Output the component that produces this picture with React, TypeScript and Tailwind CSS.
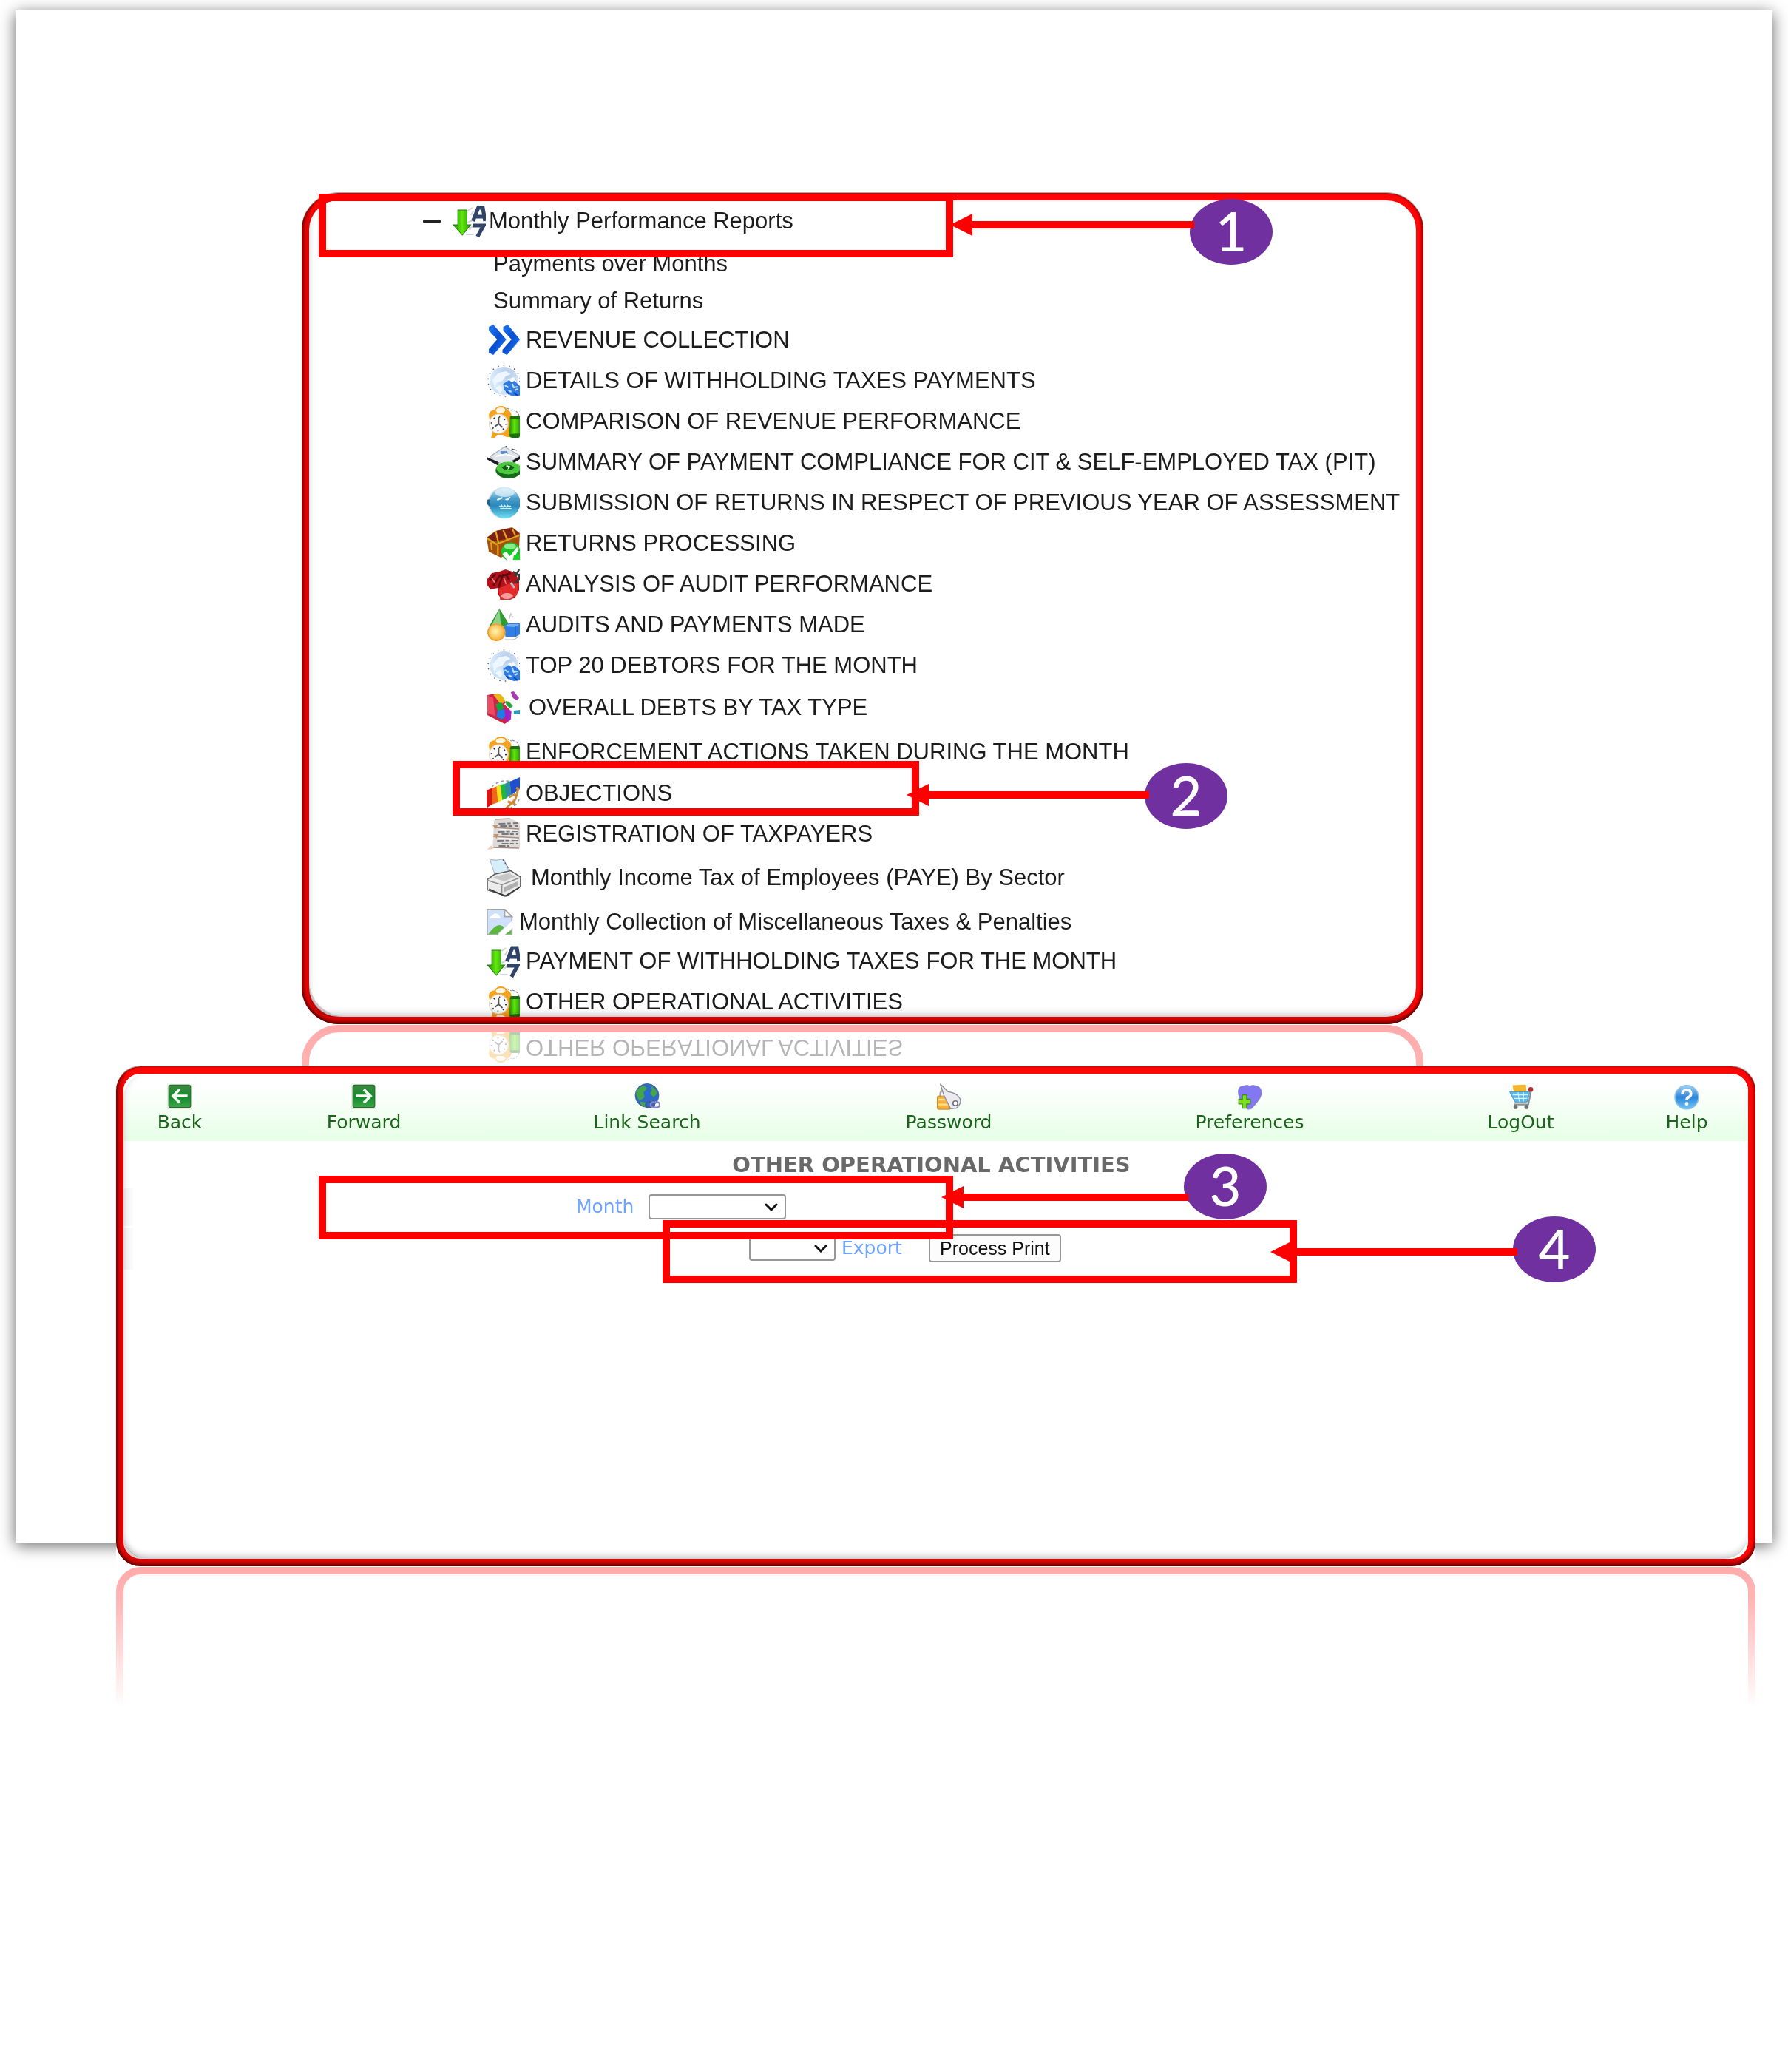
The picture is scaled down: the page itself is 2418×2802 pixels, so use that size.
import React from "react";

function Defs() {
  return (
    <svg className="absolute size-0" aria-hidden="true">
      <defs>
        <linearGradient id="blue" x1="0" y1="0" x2="1" y2="1">
          <stop offset="0" stopColor="#1d78f5" />
          <stop offset="0.5" stopColor="#0a4fd0" />
          <stop offset="1" stopColor="#1f7dff" />
        </linearGradient>
        <linearGradient id="green" x1="0" y1="0" x2="1" y2="0">
          <stop offset="0" stopColor="#1f8a08" />
          <stop offset="0.5" stopColor="#62e80c" />
          <stop offset="1" stopColor="#2a9a0a" />
        </linearGradient>
        <radialGradient id="globe" cx="0.6" cy="0.25" r="0.9">
          <stop offset="0" stopColor="#b4c9e8" />
          <stop offset="0.6" stopColor="#d9ebfb" />
          <stop offset="1" stopColor="#bcd8f2" />
        </radialGradient>
        <linearGradient id="orb" x1="0" y1="0" x2="0" y2="1">
          <stop offset="0" stopColor="#d5ecf8" />
          <stop offset="0.35" stopColor="#4b9fcb" />
          <stop offset="0.6" stopColor="#2a86bb" />
          <stop offset="1" stopColor="#6fe0f2" />
        </linearGradient>
        <radialGradient id="gold" cx="0.45" cy="0.45" r="0.6">
          <stop offset="0" stopColor="#fff6b0" />
          <stop offset="1" stopColor="#f3a528" />
        </radialGradient>
        <linearGradient id="help" x1="0" y1="0" x2="0" y2="1">
          <stop offset="0" stopColor="#9fd4f5" />
          <stop offset="0.5" stopColor="#2d86dc" />
          <stop offset="1" stopColor="#6fc6f7" />
        </linearGradient>
        <linearGradient id="leaf" x1="0" y1="0" x2="0" y2="1">
          <stop offset="0" stopColor="#3b8a3f" />
          <stop offset="0.55" stopColor="#148a2c" />
          <stop offset="1" stopColor="#3da64a" />
        </linearGradient>
      </defs>
    </svg>
  );
}

function Svg({ children, className = "h-11 w-[45px]" }: { children: React.ReactNode; className?: string }) {
  return (
    <svg viewBox="0 0 44 44" preserveAspectRatio="none" className={"shrink-0 " + className} fill="none" aria-hidden="true">
      {children}
    </svg>
  );
}

const SortIcon = () => (
  <Svg>
    <path d="M20 8l6-4M24 14l4-6M18 40h10M22 34l5-6M20 24l8-4" stroke="#d4d4d8" strokeWidth="2" />
    <path d="M7 7h12v20h5L13 41 1 27h6z" fill="url(#green)" stroke="#1c7a0c" strokeWidth="1" />
    <path d="M27 22L34 4h6l3 18M29 16h13" stroke="#2f4468" strokeWidth="5" />
    <path d="M27 28h14L33 43" stroke="#2f4468" strokeWidth="5" />
  </Svg>
);

const ChevronsIcon = () => (
  <Svg>
    <g stroke="#6e7682" strokeWidth="8" opacity="0.25">
      <path d="M7 6l14 16L6 37" />
      <path d="M26 6l14 16L25 38" />
    </g>
    <path d="M3 4l6-3 17 20L9 42l-6-3v-5l11-13L3 9z" fill="url(#blue)" />
    <path d="M22 4l6-3 16 20-17 21-6-3v-4l12-14L22 9z" fill="url(#blue)" />
  </Svg>
);

const GlobeIcon = () => (
  <Svg>
    <circle cx="23" cy="22" r="19" fill="url(#globe)" />
    <circle cx="23" cy="22" r="21" stroke="#555e6c" strokeWidth="1.4" strokeDasharray="1.5 6" />
    <path d="M8 20l8-9 10-2 6 4-7 3-4 6-8 3-2 8z" fill="#eef7ff" />
    <path d="M12 32l6-4 3 6-3 5z" fill="#eef7ff" />
    <path d="M28 20l8-3 3 6-6 2z" fill="#fff" />
    <path d="M22 26l8-5 3 3 4-2 3 3 4 4v13l-8 1-7-3-6-6z" fill="#2f7bdf" />
    <path d="M24 28l5 3M34 26l2 5 5-1M29 35l4 2M37 35l4-2" stroke="#b9dcff" strokeWidth="2.2" />
    <path d="M26 36l4 4M36 38l5 4" stroke="#0a46bf" strokeWidth="2" />
  </Svg>
);

const ClockIcon = () => (
  <Svg>
    <path d="M3 14q0-7 8-8Q13 1 19 1t8 5q6 2 6 9l-3 20 2 8h-6l-4-3h-8l-3 4H6l2-8Q3 28 4 20z" fill="#f7a21c" />
    <path d="M12 7q2-4 7-4t6 4l-3 3h-8z" fill="#fff6e4" />
    <path d="M27 4l6 3M34 6q8 2 9 9" stroke="#8c8c8c" strokeWidth="1.2" strokeDasharray="3 2" />
    <ellipse cx="16" cy="25" rx="12.5" ry="13" fill="#fafafa" stroke="#dcd2c0" />
    <path d="M16 16v9l-5 4M16 25l5 5" stroke="#555" strokeWidth="1.8" />
    <circle cx="16" cy="25" r="9.5" stroke="#333" strokeWidth="2" strokeDasharray="1.5 6" />
    <path d="M31 17q0-3 3-3h8q2 0 2 2v26q0 2-3 2h-7q-4 0-4-4z" fill="url(#green)" />
    <path d="M31 17q0-3 3-3h8q2 0 2 2v2H31zM31 39v3l3 2h8l2-3v-3z" fill="#1d6d10" />
  </Svg>
);

const RecycleIcon = () => (
  <Svg>
    <path d="M5 14L24 1l20 12-6 8-14 4-14-4z" fill="#dfe3ea" stroke="#a5abb5" />
    <path d="M24 2l3-2M33 4l7 2" stroke="#444" strokeWidth="1.2" />
    <path d="M0 15l16 7v5L0 18zM34 20l10-6v4l-8 5z" fill="#1c1c22" />
    <path d="M18 7h9l2 4h-10z" fill="#5d8fc0" />
    <path d="M12 14l14-3 12 4" stroke="#fff" strokeWidth="2" />
    <ellipse cx="29" cy="33" rx="17" ry="11" fill="#146b1a" />
    <ellipse cx="29" cy="30" rx="16" ry="8.5" fill="#4cc93f" />
    <path d="M20 29q8-7 17 0l-4 4-5-2-4 2z" fill="#0f5c14" />
    <path d="M26 27l4 1-1 3" stroke="#d6ffd0" strokeWidth="2" />
  </Svg>
);

const OrbIcon = () => (
  <Svg>
    <circle cx="23" cy="22" r="21.5" fill="#d7e4ea" />
    <ellipse cx="24" cy="22" rx="20.5" ry="21" fill="url(#orb)" />
    <path d="M1 18l-1 5 4 4V17z" fill="#2b5f80" />
    <ellipse cx="24" cy="8" rx="13" ry="6" fill="#e8f5fb" opacity="0.7" />
    <path d="M14 18l7-3M25 17q3 2 6-3" stroke="#dff4ff" strokeWidth="2" />
    <path d="M17 26q2 3 3 0 2 3 4 0 2 3 4 0 2 3 4 0M18 30h15" stroke="#bff3ff" strokeWidth="2" />
  </Svg>
);

const ChestIcon = () => (
  <Svg>
    <path d="M0 14L12 5 34 0l10 8-1 20-24 13-16-8z" fill="#a5500f" />
    <path d="M1 14L13 5 34 1l9 7-9 6-28 6z" fill="#7a1f14" />
    <path d="M1 15l12 8 30-12M12 5l4 17M22 4l6 14M34 2l4 9M6 20l1 11M15 24v14M28 22v10" stroke="#e0a31c" strokeWidth="2.2" />
    <circle cx="32" cy="33" r="12.5" fill="#17c524" />
    <ellipse cx="31" cy="26" rx="8" ry="4" fill="#a5f5a8" opacity="0.8" />
    <path d="M21 36l5-3 5 6 9-12 3 2-8 15h-8z" fill="#fff" />
    <path d="M36 38h8v6h-9z" fill="#12d81f" />
  </Svg>
);

const AuditIcon = () => (
  <Svg>
    <path d="M1 15l6-8 10-2 8-3 12 4 6 10v14l-6 11-16 2-6-7v-9l-10 2-5-7z" fill="#b3121a" />
    <path d="M16 28l12-6 15-1-3 16-8 6H18z" fill="#e42b2b" />
    <ellipse cx="27" cy="38" rx="8" ry="4" fill="#ff9c9c" />
    <path d="M4 17l8-9M9 24l9-15M16 26l6-18M25 8l5 8M18 12l14-5" stroke="#5e0b10" strokeWidth="2.4" />
    <path d="M7 14l4 6M23 14l3 8" stroke="#f08a8a" strokeWidth="1.5" />
    <path d="M35 5l5 3 3-6M36 10l7-1v7l-6 4" stroke="#3a3a3a" strokeWidth="2.4" />
    <path d="M32 20l5 7" stroke="#b9b9c4" strokeWidth="3" />
  </Svg>
);

const ShapesIcon = () => (
  <Svg>
    <path d="M17 0l12 20-6 7-10-3-9-1z" fill="#2f9a32" />
    <path d="M17 1l2 22-12-1z" fill="#8ed188" />
    <path d="M30 14l2-7 3 5M24 42h12l7-4" stroke="#b9b9c4" strokeWidth="1.2" />
    <path d="M23 24l6-4h15v15l-5 3H25z" fill="#2f7fe6" />
    <path d="M23 24l6-3h15l-6 4z" fill="#6fb0f6" />
    <path d="M38 24v14" stroke="#1b5fc4" strokeWidth="1.5" />
    <circle cx="13" cy="32" r="12" fill="url(#gold)" />
    <circle cx="13" cy="32" r="11" stroke="#f0a030" strokeWidth="1.5" />
  </Svg>
);

const CubesIcon = () => (
  <Svg>
    <path d="M1 5l10-2 9 4 12 20-1 12-7 5L1 32z" fill="#cf2347" />
    <path d="M1 5l8 4 2 24-10-4z" fill="#f04a62" />
    <path d="M9 5q10-6 16 8l-6 5Q12 8 9 5z" fill="#e9b414" />
    <path d="M12 17l8-2 3 8-8 4z" fill="#14a83a" />
    <path d="M15 26l8-2 4 9-7 5-7-4z" fill="#1f7be6" />
    <path d="M24 24l9 2-1 12-7 3z" fill="#a51fc6" />
    <path d="M23 17l6-3 6 5-5 5z" fill="#fff" />
    <path d="M25 13l5 1 5 6-4 3-5-5z" fill="#26a339" />
    <path d="M32 1l4-1 7 9-3 3-5-3z" fill="#a83bb5" />
    <path d="M36 26l9-1v6h-9z" fill="#2f9ab5" />
  </Svg>
);

const RainbowIcon = () => (
  <Svg>
    <path d="M7 13Q18 2 33 6M43 30q-4 10-14 12" stroke="#9a9a9a" strokeWidth="1.5" strokeDasharray="4 3" />
    <path d="M0 18l8-4-1 23-6 4q-3-8-1-23z" fill="#d91414" />
    <path d="M7 15l7-3 1 22-8 3z" fill="#f2661b" />
    <path d="M13 12l6-2 2 21-6 3z" fill="#f7e01c" />
    <path d="M18 10l7-1 2 19-6 3z" fill="#1fb83a" />
    <path d="M24 9l8-4 2 18-8 5z" fill="#2f8f9e" />
    <path d="M31 6l13-6v16l-11 8z" fill="#1f4fd0" />
    <path d="M39 14l3 2-4 14-12 12M30 27l8-4M28 33l10 3" stroke="#d08a35" strokeWidth="3" />
  </Svg>
);

const PapersIcon = () => (
  <Svg>
    <path d="M10 3l22-2 12 6v34H8z" fill="#dedbd9" />
    <path d="M11 2l20-1M10 13l33 2M9 25l34 2M9 40l34 1" stroke="#a58f84" strokeWidth="1.5" />
    <path d="M16 8l26-1M18 11h24M15 19l26-1M20 22h22M14 31l28-1M20 35h22M16 38h14" stroke="#77777c" strokeWidth="2" strokeDasharray="9 2 5 3" />
    <path d="M17 16l24 1M16 28l25 1" stroke="#fff" strokeWidth="2" />
    <path d="M8 10h7l-3 5zM9 22h7l-3 6zM12 33l4 5" fill="#c4936b" />
    <path d="M1 43l5-6 3 5z" fill="#f4c9bd" />
  </Svg>
);

const PrinterIcon = () => (
  <Svg className="h-[52px] w-[48px]">
    <path d="M4 1q9 2 17-1l8 17-18 3z" fill="#d6eefa" stroke="#a9b4c4" strokeWidth="1" />
    <path d="M20 1l10 14" stroke="#555e6c" strokeWidth="1.2" strokeDasharray="3 1.5" />
    <path d="M1 24l9-6 20-4 12 7v11L25 43 1 36z" fill="#ececec" stroke="#5a5a5a" strokeWidth="1.3" />
    <path d="M1 25l18 5 22-8M19 30v11" stroke="#8e8e8e" strokeWidth="1.3" />
    <path d="M8 22l14 4 14-5-8-4-16 3z" fill="#c6c6c6" />
    <path d="M3 35l20 8 18-10" stroke="#3a3a3a" strokeWidth="1.4" />
    <path d="M21 33l18-7v5l-18 8z" fill="#b0b0b0" />
  </Svg>
);

const BrokenIcon = () => (
  <Svg className="h-9 w-9">
    <path d="M1 1h29l12 12v30H1z" fill="#cfe0fb" stroke="#a3a3a3" strokeWidth="2" />
    <path d="M3 42Q12 28 21 27q6 1 8 4L18 42z" fill="#5cb83c" />
    <path d="M30 42l11-7v7z" fill="#5cb83c" />
    <path d="M5 16q0-4 4-4 3-6 8-4 5 2 6 8z" fill="#fff" />
    <path d="M44 18L18 44h11l15-13z" fill="#fff" />
    <path d="M30 1v12h12z" fill="#fff" stroke="#a3a3a3" strokeWidth="2" />
  </Svg>
);

type Item = { label: string; icon?: React.ReactNode; row?: string; link?: string };

const items: Item[] = [
  { label: "Payments over Months", row: "mt-[6px] h-[50px] pl-[249px]" },
  { label: "Summary of Returns", row: "h-[50px] pl-[249px]" },
  { label: "REVENUE COLLECTION", icon: <ChevronsIcon /> },
  { label: "DETAILS OF WITHHOLDING TAXES PAYMENTS", icon: <GlobeIcon /> },
  { label: "COMPARISON OF REVENUE PERFORMANCE", icon: <ClockIcon /> },
  { label: "SUMMARY OF PAYMENT COMPLIANCE FOR CIT & SELF-EMPLOYED TAX (PIT)", icon: <RecycleIcon /> },
  { label: "SUBMISSION OF RETURNS IN RESPECT OF PREVIOUS YEAR OF ASSESSMENT", icon: <OrbIcon /> },
  { label: "RETURNS PROCESSING", icon: <ChestIcon /> },
  { label: "ANALYSIS OF AUDIT PERFORMANCE", icon: <AuditIcon /> },
  { label: "AUDITS AND PAYMENTS MADE", icon: <ShapesIcon /> },
  { label: "TOP 20 DEBTORS FOR THE MONTH", icon: <GlobeIcon /> },
  { label: "OVERALL DEBTS BY TAX TYPE", icon: <CubesIcon />, row: "h-[60px] pl-[240px]", link: "gap-3" },
  { label: "ENFORCEMENT ACTIONS TAKEN DURING THE MONTH", icon: <ClockIcon />, row: "h-[60px] pl-[240px]" },
  { label: "OBJECTIONS", icon: <RainbowIcon />, row: "h-[52px] pl-[240px]" },
  { label: "REGISTRATION OF TAXPAYERS", icon: <PapersIcon />, row: "h-[58px] pl-[240px]" },
  { label: "Monthly Income Tax of Employees (PAYE) By Sector", icon: <PrinterIcon />, row: "h-[60px] pl-[240px]", link: "gap-3" },
  { label: "Monthly Collection of Miscellaneous Taxes & Penalties", icon: <BrokenIcon />, row: "h-[60px] pl-[240px]" },
  { label: "PAYMENT OF WITHHOLDING TAXES FOR THE MONTH", icon: <SortIcon />, row: "h-[46px] pl-[240px]" },
  { label: "OTHER OPERATIONAL ACTIVITIES", icon: <ClockIcon />, row: "h-16 pl-[240px]" },
];

function Frame({ radius, children }: { radius: string; children: React.ReactNode }) {
  return (
    <>
      <div
        className={
          "flex flex-col overflow-hidden border-[10px] border-[#ff0505] bg-white [-webkit-box-reflect:below_1px_linear-gradient(to_top,rgba(0,0,0,0.34),rgba(0,0,0,0.3)_6%,transparent_28%)] " +
          radius
        }
      >
        {children}
      </div>
      <div
        className={
          "pointer-events-none absolute inset-0 shadow-[0_-1px_1px_#9aa3a3,inset_0_-4px_4px_rgba(0,0,0,0.45),inset_3px_0_3px_rgba(0,0,0,0.3),inset_-3px_0_3px_rgba(0,0,0,0.25),inset_10px_-10px_0_rgba(80,0,0,0.18)] " +
          radius
        }
      />
      <div className="pointer-events-none absolute inset-[10px] rounded-[32px] shadow-[inset_0_-8px_8px_-4px_rgba(0,20,20,0.22),inset_6px_0_8px_-5px_rgba(0,60,60,0.15)]" />
    </>
  );
}

function Callout({ n, place, arrow }: { n: number; place: string; arrow: string }) {
  return (
    <div className={"pointer-events-none absolute flex items-start " + place}>
      <div className={"relative z-10 flex flex-1 items-center " + arrow}>
        <svg viewBox="0 0 30 30" className="size-[30px] shrink-0" aria-hidden="true">
          <path d="M0 15L30 0v30z" fill="#f00" />
        </svg>
        <div className="h-[10px] flex-1 bg-[#ff0000]" />
      </div>
      <div className="-ml-[6px] flex h-[89px] w-28 shrink-0 items-center justify-center rounded-[50%] bg-[#7030a0] pb-1 font-[Lato,sans-serif] text-[74px] leading-none font-medium text-white">
        {n}
      </div>
    </div>
  );
}

function Highlight({ place }: { place: string }) {
  return <div className={"pointer-events-none absolute border-[10px] border-[#ff0000] " + place} />;
}

function Reports() {
  return (
    <nav aria-label="Reports" className="pt-px text-[31px] leading-10 text-[#1c1c1c]">
      <ul className="-mb-3 whitespace-nowrap">
        <li>
          <a href="#monthly" className="flex h-[54px] items-center gap-1 pl-[154px]">
            <span className="mr-3 h-[5px] w-[24px] rounded-xs bg-[#222]" />
            <SortIcon />
            <span>Monthly Performance Reports</span>
          </a>
          <ul>
            {items.map((it) => (
              <li key={it.label} className={"flex items-center " + (it.row ?? "h-[55px] pl-[240px]")}>
                <a href="#report" className={"flex items-center " + (it.link ?? "gap-2")}>
                  {it.icon}
                  <span>{it.label}</span>
                </a>
              </li>
            ))}
          </ul>
        </li>
      </ul>
    </nav>
  );
}

const ArrowTile = ({ flip }: { flip?: boolean }) => (
  <Svg className="size-9">
    <rect x="1" y="1" width="42" height="42" fill="#e6efe2" />
    <rect x="4" y="3" width="36" height="37" rx="3" fill="url(#leaf)" stroke="#2c6a33" strokeWidth="1.5" />
    <path d={flip ? "M9 21h24M22 10l11 11-11 11" : "M35 21H11M22 10L11 21l11 11"} stroke="#f2fff2" strokeWidth="4.5" />
  </Svg>
);

const LinkIcon = () => (
  <Svg className="size-9">
    <circle cx="22" cy="20" r="19.5" fill="#2f69c6" stroke="#3d5f94" />
    <path d="M4 14Q10 4 18 4l4 5-6 6 2 8-8 6-5-7zM28 4q9 4 11 13l-6 6-6-6 3-6zM12 30l8 2 2 8q-8-1-12-8z" fill="#46a54a" />
    <path d="M20 12l6 4-3 8z" fill="#1d6df0" />
    <rect x="20" y="31" width="14" height="9" rx="4.5" stroke="#3c5a9c" strokeWidth="3" />
    <rect x="28" y="31" width="15" height="9" rx="4.5" stroke="#8d84c6" strokeWidth="3" />
  </Svg>
);

const PasswordIcon = () => (
  <Svg className="size-9">
    <path d="M8 22v-4q0-6 6-6 5 0 5 6v4" stroke="#a8a8a8" strokeWidth="3" />
    <rect x="3" y="21" width="22" height="22" rx="2" fill="#f4b03e" stroke="#b57c28" />
    <path d="M5 27h18M5 35h18" stroke="#ffe08a" strokeWidth="3" />
    <path d="M8 1l13 13q14 1 20 12 2 8-6 15l-10 1L14 20z" fill="#eceaf0" stroke="#8b8792" strokeWidth="1.6" />
    <circle cx="33" cy="33" r="4" fill="#fff" stroke="#77737e" strokeWidth="2" />
  </Svg>
);

const HeartIcon = () => (
  <Svg className="size-9">
    <path d="M3 14Q3 4 13 4q6-2 9 1 4-3 10-1 9 1 10 12-1 8-9 17l-8 9-6 1-7-8Q3 24 3 14z" fill="#8378f2" stroke="#8d8bb0" />
    <path d="M10 19h7v7h6v8h-6v7h-7v-7H4v-8h6z" fill="#7be01e" stroke="#3f8a1c" strokeWidth="1.5" />
  </Svg>
);

const CartIcon = () => (
  <Svg className="size-9">
    <path d="M8 3l22-1 1 12H10z" fill="#f5b52c" />
    <path d="M3 14h34l-5 17H12z" fill="#5cb8ea" stroke="#3d8dc4" />
    <path d="M8 19h25M11 25h21M17 15l2 15M26 15v15" stroke="#d9f1ff" strokeWidth="1.5" />
    <path d="M39 11l-5 24H11" stroke="#8c8f96" strokeWidth="2.5" />
    <circle cx="38" cy="10" r="4" fill="#c0282c" />
    <circle cx="13" cy="39" r="3.5" fill="#6a6d74" />
    <circle cx="31" cy="39" r="3.5" fill="#6a6d74" />
  </Svg>
);

const HelpIcon = () => (
  <Svg className="size-9">
    <circle cx="22" cy="23" r="19.5" fill="url(#help)" stroke="#8fbfe6" strokeWidth="2" />
    <path d="M15 18q0-7 7-7t7 6q0 4-4 6-3 1-3 5" stroke="#fff" strokeWidth="4.5" />
    <circle cx="22" cy="34" r="3" fill="#fff" />
  </Svg>
);

const tools = [
  { label: "Back", icon: <ArrowTile /> },
  { label: "Forward", icon: <ArrowTile flip /> },
  { label: "Link Search", icon: <LinkIcon /> },
  { label: "Password", icon: <PasswordIcon /> },
  { label: "Preferences", icon: <HeartIcon /> },
  { label: "LogOut", icon: <CartIcon /> },
  { label: "Help", icon: <HelpIcon /> },
];

function Picker({ id, size }: { id: string; size: string }) {
  return (
    <div className={"relative h-[34px] " + size}>
      <select id={id} className="size-full appearance-none rounded-[4px] border-2 border-[#979797] bg-white text-[25px]">
        <option value=""></option>
      </select>
      <svg viewBox="0 0 18 11" className="pointer-events-none absolute top-3 right-[11px] h-[11px] w-[18px]" fill="none" aria-hidden="true">
        <path d="M2 2l7 7 7-7" stroke="#111" strokeWidth="3" strokeLinecap="round" />
      </svg>
    </div>
  );
}

function Activities() {
  return (
    <div className="pb-[391px] text-[25px] leading-8">
      <div className="grid h-[91px] grid-cols-[152fr_346fr_420fr_396fr_418fr_315fr_134fr_16fr] bg-linear-to-b from-white from-15% to-[#e6ffe6] pt-[13px]">
        {tools.map((t) => (
          <a key={t.label} href="#tool" className="flex flex-col items-center gap-px text-[#1a651a]">
            {t.icon}
            <span className="whitespace-nowrap">{t.label}</span>
          </a>
        ))}
      </div>
      <h1 className="flex h-[62px] items-center justify-center pt-px pr-3 text-[29px] font-bold text-[#696969]">OTHER OPERATIONAL ACTIVITIES</h1>
      <div className="flex h-[54px] items-center">
        <div className="h-[51px] w-[13px] bg-linear-to-r from-[#f4f4f4] to-[#fbfbfb]" />
        <label htmlFor="month" className="mr-5 ml-[599px] text-[#6ea3ff]">
          Month
        </label>
        <Picker id="month" size="w-[186px]" />
      </div>
      <div className="flex h-[58px] items-center">
        <div className="h-[57px] w-[13px] bg-linear-to-r from-[#f4f4f4] to-[#fbfbfb]" />
        <div className="ml-[833px]">
          <Picker id="format" size="w-[117px]" />
        </div>
        <label htmlFor="format" className="ml-2 text-[#6ea3ff]">
          Export
        </label>
        <button
          type="button"
          className="ml-9 h-[38px] w-[179px] rounded-[4px] border-2 border-[#979797] bg-[#fcfcfc] font-['Liberation_Sans',sans-serif] text-[25px] leading-8 text-[#111]"
        >
          Process Print
        </button>
      </div>
    </div>
  );
}

export default function App() {
  return (
    <main className="min-h-screen bg-white pt-[14px]">
      <Defs />
      <section className="mx-[21px] flex flex-col bg-white pt-[247px] shadow-[0_4px_20px_rgba(0,0,0,0.6)]">
        <div className="relative mr-[472px] ml-[387px] font-['Liberation_Sans',sans-serif]">
          <Frame radius="rounded-[50px]">
            <Reports />
          </Frame>
          <Highlight place="top-[1px] left-[23px] h-[86px] w-[858px]" />
          <Callout n={1} place="top-[8px] left-[877px] w-[436px]" arrow="mt-[20px]" />
          <Highlight place="top-[768px] left-[204px] h-[74px] w-[631px]" />
          <Callout n={2} place="top-[771px] left-[818px] w-[434px]" arrow="mt-[28px]" />
        </div>
        <div className="relative mt-[57px] mr-[23px] -mb-[32px] ml-[136px] bg-white font-['DejaVu_Sans',sans-serif]">
          <Frame radius="rounded-[33px]">
            <Activities />
          </Frame>
          <Highlight place="top-[148px] left-[274px] h-[86px] w-[858px]" />
          <Callout n={3} place="top-[118px] left-[1116px] w-[440px]" arrow="mt-[44px]" />
          <Highlight place="top-[208px] left-[739px] h-[85px] w-[858px]" />
          <Callout n={4} place="top-[203px] left-[1561px] w-[440px]" arrow="mt-[33px]" />
        </div>
      </section>
    </main>
  );
}
